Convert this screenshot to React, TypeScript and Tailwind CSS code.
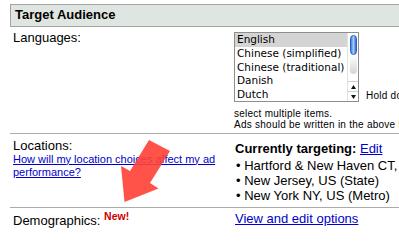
const languages = [
  "English",
  "Chinese (simplified)",
  "Chinese (traditional)",
  "Danish",
  "Dutch",
];

const targets = [
  "Hartford & New Haven CT, US (Metro)",
  "New Jersey, US (State)",
  "New York NY, US (Metro)",
];

function ListBox() {
  return (
    <div className="flex h-[70px] w-[125px] overflow-hidden border border-[#8e8e8e] bg-white">
      <div className="flex-1 font-['DejaVu_Sans',sans-serif] text-[10.5px] leading-[13.75px] text-black">
        {languages.map((l, i) => (
          <div key={l} className={`whitespace-nowrap pl-[2px] ${i === 0 ? "bg-[#d4d4d4]" : ""}`}>
            {l}
          </div>
        ))}
      </div>
      {/* aqua scrollbar */}
      <div className="flex w-[11px] flex-col border-l border-[#e2e2e2] bg-white">
        <div className="px-[1.5px] pt-[2px]">
          <div className="h-[20px] rounded-full border border-[#2a5fbf] bg-gradient-to-r from-[#3f7fe0] via-[#a6cdf8] to-[#2f6ad2]" />
          <div className="h-[19px] rounded-b-full bg-gradient-to-b from-white to-[#d5d5d5]" />
        </div>
        <div className="flex-1" />
        <div className="flex h-[10px] items-center justify-center border-t border-[#d0d0d0]">
          <svg width="5" height="4" viewBox="0 0 5 4">
            <polygon points="2.5,0 5,4 0,4" fill="#111" />
          </svg>
        </div>
        <div className="flex h-[10px] items-center justify-center border-t border-[#d0d0d0]">
          <svg width="5" height="4" viewBox="0 0 5 4">
            <polygon points="0,0 5,0 2.5,4" fill="#111" />
          </svg>
        </div>
      </div>
    </div>
  );
}

function Arrow() {
  return (
    <svg className="pointer-events-none absolute left-0 top-0" width="399" height="242">
      <polygon
        points="149,140 170,151 150,183 158.5,188.5 124.5,202 121,166 130,171"
        fill="#ff4035"
        opacity="0.9"
      />
    </svg>
  );
}

export default function App() {
  return (
    <div className="relative h-[242px] w-[399px] overflow-hidden bg-white font-['Liberation_Sans',Arial,sans-serif] text-black">
      <div className="w-[560px] pl-[10px] pt-[4px]">
        {/* Header */}
        <div className="h-[23px] border border-[#a3a3a3] bg-[#dfe6e1] pl-[4px] text-[13px] font-bold leading-[19px]">
          Target Audience
        </div>

        {/* Languages */}
        <div className="grid grid-cols-[224px_1fr]">
          <div className="pl-[3px] pt-[3px] text-[13px] leading-[16px]">Languages:</div>
          <div className="pb-[2.5px] pt-[5px]">
            <div className="flex items-end gap-[7px]">
              <ListBox />
              <span className="whitespace-nowrap text-[10px] leading-[12px] tracking-[0.25px]">
                Hold down the Command key to
              </span>
            </div>
            <div className="mt-[5.5px] whitespace-nowrap text-[10px] leading-[11.5px] tracking-[0.25px]">
              select multiple items.
              <br />
              Ads should be written in the above language(s).
            </div>
          </div>
        </div>

        {/* Locations */}
        <div className="grid grid-cols-[224px_1fr] border-t border-[#ababab]">
          <div className="pl-[3px] pt-[4.5px]">
            <div className="text-[13px] leading-[14px]">Locations:</div>
            <a className="block text-[11px] leading-[13px] text-[#0000cc] underline" href="#">
              How will my location choices affect my ad performance?
            </a>
          </div>
          <div className="pb-[4.5px] pl-[1px] pt-[5.5px] text-[13px]">
            <div className="leading-[18px]">
              <span className="font-bold">Currently targeting: </span>
              <a className="text-[#0000cc] underline" href="#">
                Edit
              </a>
            </div>
            {targets.map((t) => (
              <div key={t} className="whitespace-nowrap pl-[1px] leading-[15px]">
                • {t}
              </div>
            ))}
          </div>
        </div>

        {/* Demographics */}
        <div className="grid grid-cols-[224px_1fr] border-t border-[#ababab]">
          <div className="pl-[3px] pt-[5px] text-[13px] leading-[16px]">
            Demographics: <sup className="text-[10.5px] font-bold text-[#cc0000]">New!</sup>
          </div>
          <div className="pl-[1px] pt-[3px] text-[13px] leading-[16px]">
            <a className="text-[#0000cc] underline" href="#">
              View and edit options
            </a>
          </div>
        </div>
      </div>
      <Arrow />
    </div>
  );
}
